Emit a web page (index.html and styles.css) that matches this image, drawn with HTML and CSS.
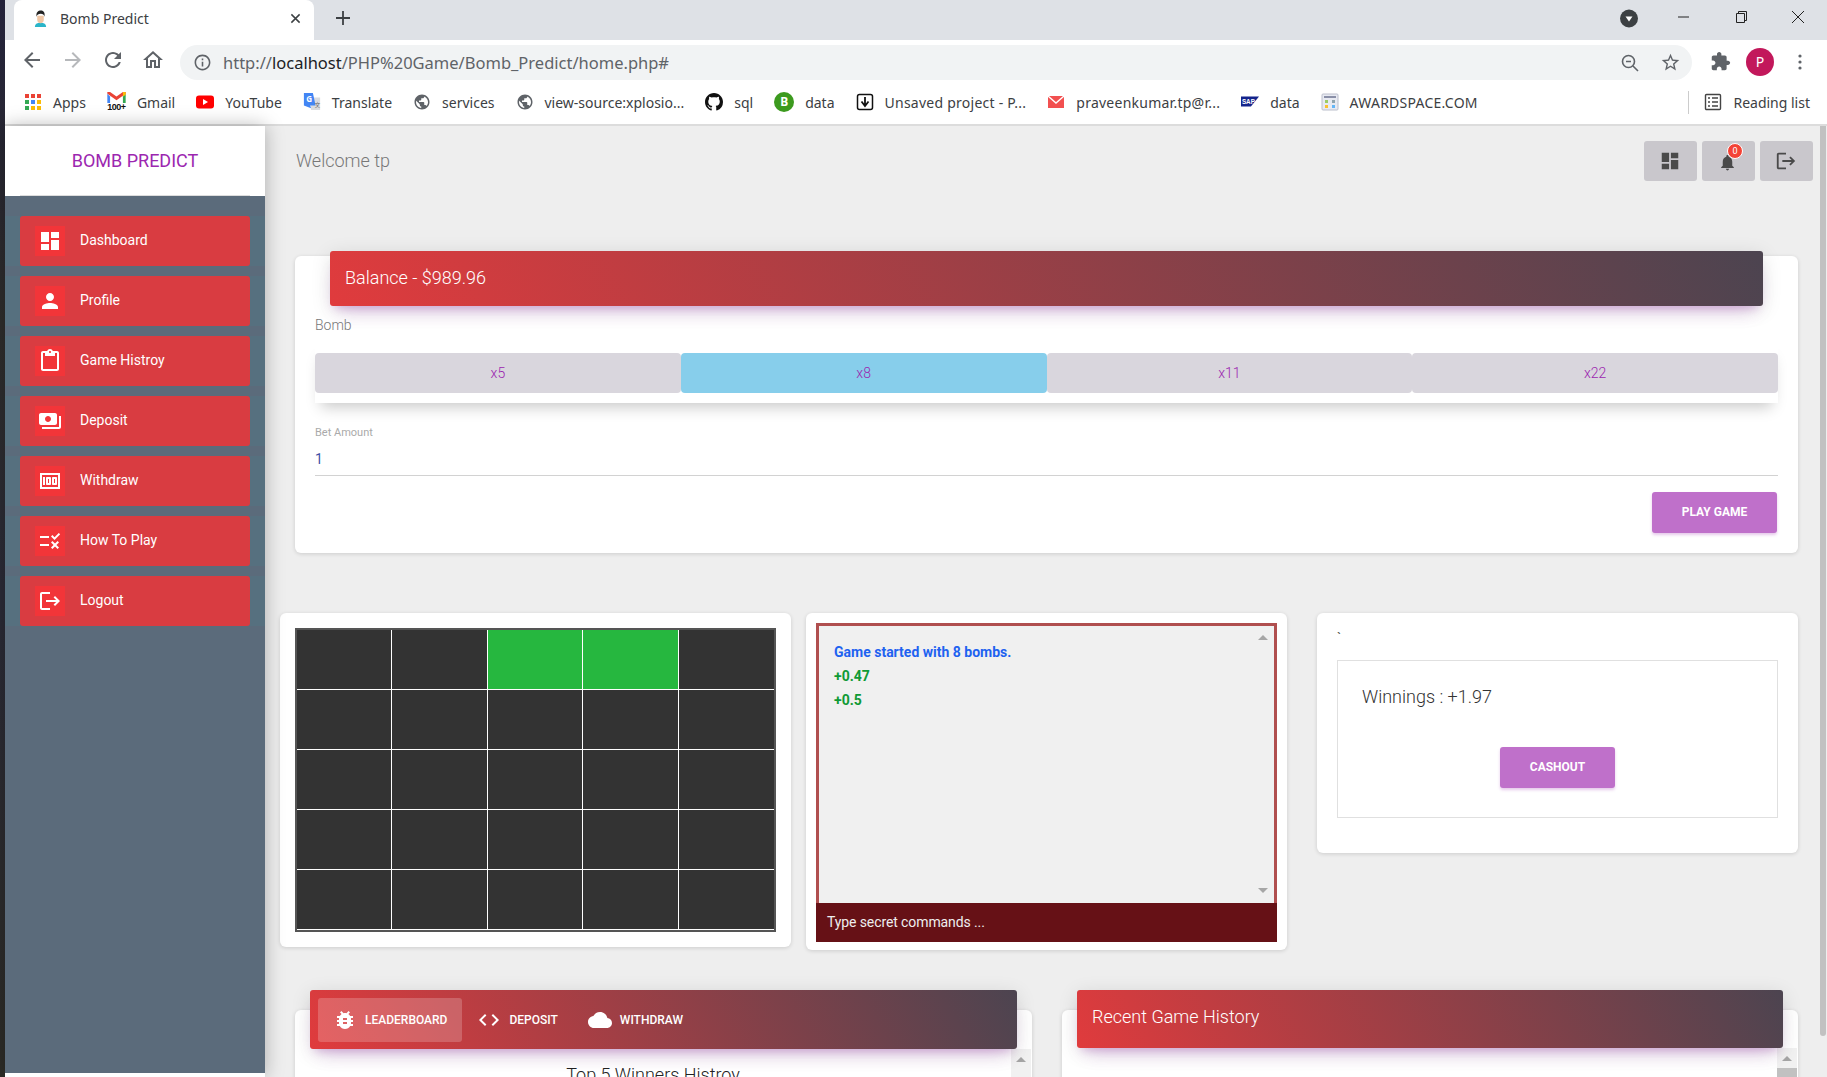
FILE: index.html
```html
<!DOCTYPE html>
<html>
<head>
  <title>Bomb Predict</title>
  <link rel="stylesheet" href="styles.css">
</head>
<body>
  <svg class="defs">
    <symbol id="i-dashboard" viewBox="0 0 24 24"><path d="M3 13h8V3H3v10zm0 8h8v-6H3v6zm10 0h8V11h-8v10zm0-18v6h8V3h-8z"/></symbol>
    <symbol id="i-person" viewBox="0 0 24 24"><path d="M12 12c2.21 0 4-1.79 4-4s-1.79-4-4-4-4 1.79-4 4 1.79 4 4 4zm0 2c-2.67 0-8 1.34-8 4v2h16v-2c0-2.66-5.33-4-8-4z"/></symbol>
    <symbol id="i-clipboard" viewBox="0 0 24 24"><path d="M19 2h-4.18C14.4.84 13.3 0 12 0c-1.3 0-2.4.84-2.82 2H5c-1.1 0-2 .9-2 2v16c0 1.1.9 2 2 2h14c1.1 0 2-.9 2-2V4c0-1.1-.9-2-2-2zm-7 0c.55 0 1 .45 1 1s-.45 1-1 1-1-.45-1-1 .45-1 1-1zm7 18H5V4h2v3h10V4h2v16z"/></symbol>
    <symbol id="i-payments" viewBox="0 0 24 24"><path d="M19 14V6c0-1.1-.9-2-2-2H3c-1.1 0-2 .9-2 2v8c0 1.1.9 2 2 2h14c1.1 0 2-.9 2-2zm-9-1c-1.66 0-3-1.34-3-3s1.34-3 3-3 3 1.34 3 3-1.34 3-3 3zm13-6v11c0 1.1-.9 2-2 2H4v-2h17V7h2z"/></symbol>
    <symbol id="i-money" viewBox="0 0 24 24"><path d="M5 8h2v8H5zm7 0H9c-.55 0-1 .45-1 1v6c0 .55.45 1 1 1h3c.55 0 1-.45 1-1V9c0-.55-.45-1-1-1zm-1 6h-1v-4h1v4zm7-6h-3c-.55 0-1 .45-1 1v6c0 .55.45 1 1 1h3c.55 0 1-.45 1-1V9c0-.55-.45-1-1-1zm-1 6h-1v-4h1v4zM2 4v16h20V4H2zm2 14V6h16v12H4z"/></symbol>
    <symbol id="i-rule" viewBox="0 0 24 24"><path d="M16.54 11L13 7.46l1.41-1.41 2.12 2.12 4.24-4.24 1.41 1.41L16.54 11zM11 7H2v2h9V7zm10 6.41L19.59 12 17 14.59 14.41 12 13 13.41 15.59 16 13 18.59 14.41 20 17 17.41 19.59 20 21 18.59 18.41 16 21 13.41zM11 15H2v2h9v-2z"/></symbol>
    <symbol id="i-logout" viewBox="0 0 24 24"><path d="M17 7l-1.41 1.41L18.17 11H8v2h10.17l-2.58 2.58L17 17l5-5zM4 5h8V3H4c-1.1 0-2 .9-2 2v14c0 1.1.9 2 2 2h8v-2H4V5z"/></symbol>
    <symbol id="i-bell" viewBox="0 0 24 24"><path d="M12 22c1.1 0 2-.9 2-2h-4c0 1.1.89 2 2 2zm6-6v-5c0-3.07-1.64-5.64-4.5-6.32V4c0-.83-.67-1.5-1.5-1.5s-1.5.67-1.5 1.5v.68C7.63 5.36 6 7.92 6 11v5l-2 2v1h16v-1l-2-2z"/></symbol>
    <symbol id="i-bug" viewBox="0 0 24 24"><path d="M20 8h-2.81c-.45-.78-1.07-1.45-1.82-1.96L17 4.41 15.59 3l-2.17 2.17C12.96 5.06 12.49 5 12 5c-.49 0-.96.06-1.41.17L8.41 3 7 4.41l1.62 1.63C7.88 6.55 7.26 7.22 6.81 8H4v2h2.09c-.05.33-.09.66-.09 1v1H4v2h2v1c0 .34.04.67.09 1H4v2h2.81c1.04 1.79 2.97 3 5.19 3s4.15-1.21 5.19-3H20v-2h-2.09c.05-.33.09-.66.09-1v-1h2v-2h-2v-1c0-.34-.04-.67-.09-1H20V8zm-6 8h-4v-2h4v2zm0-4h-4v-2h4v2z"/></symbol>
    <symbol id="i-code" viewBox="0 0 24 24"><path d="M9.4 16.6L4.8 12l4.6-4.6L8 6l-6 6 6 6 1.4-1.4zm5.2 0l4.6-4.6-4.6-4.6L16 6l6 6-6 6-1.4-1.4z"/></symbol>
    <symbol id="i-cloud" viewBox="0 0 24 24"><path d="M19.35 10.04C18.67 6.59 15.64 4 12 4 9.11 4 6.6 5.64 5.35 8.04 2.34 8.36 0 10.91 0 14c0 3.31 2.69 6 6 6h13c2.76 0 5-2.24 5-5 0-2.64-2.05-4.78-4.65-4.96z"/></symbol>
    <symbol id="i-globe" viewBox="0 0 24 24"><path d="M12 2C6.48 2 2 6.48 2 12s4.48 10 10 10 10-4.48 10-10S17.52 2 12 2zm-1 17.93c-3.95-.49-7-3.85-7-7.93 0-.62.08-1.21.21-1.79L9 15v1c0 1.1.9 2 2 2v1.93zm6.9-2.54c-.26-.81-1-1.39-1.9-1.39h-1v-3c0-.55-.45-1-1-1H8v-2h2c.55 0 1-.45 1-1V7h2c1.1 0 2-.9 2-2v-.41c2.93 1.19 5 4.06 5 7.41 0 2.08-.8 3.97-2.1 5.39z"/></symbol>
  </svg>

  <div class="desktop-edge"></div>

  <div class="browser">
    <div class="tabstrip">
      <div class="tab">
        <svg class="favicon" viewBox="0 0 16 18">
          <path fill="#2bb5c9" d="M2 18c0-3 2-4.500 6-4.500s6 1.500 6 4.500z"/>
          <path fill="#f1c7a5" d="M4.500 6h7v4.500c0 2-1.500 3.500-3.500 3.500s-3.500-1.500-3.500-3.500z"/>
          <path fill="#222" d="M3.800 7C3 2.500 5.500 .5 8.500 .5s4.500 2.500 3.700 6.500c-.5-2-1.500-3-4-3s-3.800 1-4.400 3z"/>
        </svg>
        <span class="tab-title">Bomb Predict</span>
        <svg class="tab-close" viewBox="0 0 12 12"><path d="M1.500 1.500l9 9m0-9l-9 9" stroke="#3c4043" stroke-width="1.600" fill="none"/></svg>
      </div>
      <svg class="new-tab" viewBox="0 0 16 16"><path d="M8 1v14M1 8h14" stroke="#3c4043" stroke-width="1.800" fill="none"/></svg>
      <div class="window-controls">
        <svg class="media-btn" viewBox="0 0 18 18"><circle cx="9" cy="9" r="9" fill="#3c4043"/><path d="M5.500 7h7L9 12z" fill="#fff"/></svg>
        <svg class="win-btn" viewBox="0 0 14 14"><path d="M1 7h11" stroke="#222" fill="none"/></svg>
        <svg class="win-btn" viewBox="0 0 14 14"><path d="M2.500 3.500h8v9h-8zM4.500 3.500v-2h8v9h-2" stroke="#222" fill="none"/></svg>
        <svg class="win-btn" viewBox="0 0 14 14"><path d="M1 1l12 12M13 1L1 13" stroke="#222" fill="none"/></svg>
      </div>
    </div>

    <div class="toolbar">
      <svg class="tool-ico" viewBox="0 0 24 24"><path d="M20 11H7.830l5.590-5.590L12 4l-8 8 8 8 1.410-1.410L7.830 13H20v-2z"/></svg>
      <svg class="tool-ico muted" viewBox="0 0 24 24"><path d="M12 4l-1.410 1.410L16.170 11H4v2h12.170l-5.580 5.590L12 20l8-8z"/></svg>
      <svg class="tool-ico" viewBox="0 0 24 24"><path d="M17.650 6.350C16.200 4.900 14.210 4 12 4c-4.420 0-7.990 3.580-7.990 8s3.570 8 7.990 8c3.730 0 6.840-2.550 7.730-6h-2.080c-.82 2.330-3.040 4-5.650 4-3.310 0-6-2.690-6-6s2.690-6 6-6c1.660 0 3.140.69 4.220 1.780L13 11h7V4l-2.350 2.350z"/></svg>
      <svg class="tool-ico" viewBox="0 0 24 24"><path d="M12 5.690l5 4.500V18h-2v-6H9v6H7v-7.810l5-4.500M12 3L2 12h3v8h6v-6h2v6h6v-8h3L12 3z"/></svg>
      <div class="address">
        <svg class="addr-info" viewBox="0 0 24 24"><path d="M11 7h2v2h-2zm0 4h2v6h-2zm1-9C6.480 2 2 6.480 2 12s4.480 10 10 10 10-4.480 10-10S17.520 2 12 2zm0 18c-4.410 0-8-3.590-8-8s3.590-8 8-8 8 3.590 8 8-3.590 8-8 8z"/></svg>
        <span class="url">http://<b>localhost</b>/PHP%20Game/Bomb_Predict/home.php#</span>
        <svg class="addr-zoom" viewBox="0 0 20 20"><circle cx="8.500" cy="8.500" r="6" stroke="#5f6368" stroke-width="1.600" fill="none"/><path d="M13 13l5 5M6 8.500h5" stroke="#5f6368" stroke-width="1.600" fill="none"/></svg>
        <svg class="addr-star" viewBox="0 0 24 24"><path d="M22 9.240l-7.190-.62L12 2 9.190 8.630 2 9.240l5.460 4.730L5.820 21 12 17.270 18.180 21l-1.630-7.030L22 9.240zM12 15.400l-3.760 2.270 1-4.280-3.320-2.880 4.380-.38L12 6.100l1.710 4.040 4.380.38-3.320 2.880 1 4.280L12 15.400z"/></svg>
      </div>
      <svg class="ext-ico" viewBox="0 0 24 24"><path d="M20.500 11H19V7c0-1.100-.9-2-2-2h-4V3.500C13 2.120 11.880 1 10.500 1S8 2.120 8 3.500V5H4c-1.100 0-1.990.9-1.990 2v3.800H3.500c1.490 0 2.700 1.210 2.700 2.700s-1.210 2.700-2.700 2.700H2V20c0 1.100.9 2 2 2h3.800v-1.500c0-1.490 1.210-2.700 2.700-2.700 1.490 0 2.700 1.210 2.700 2.700V22H17c1.100 0 2-.9 2-2v-4h1.500c1.380 0 2.500-1.120 2.500-2.500S21.880 11 20.500 11z"/></svg>
      <div class="avatar">P</div>
      <svg class="menu-dots" viewBox="0 0 4 16"><circle cx="2" cy="2" r="1.600"/><circle cx="2" cy="8" r="1.600"/><circle cx="2" cy="14" r="1.600"/></svg>
    </div>

    <div class="bookmarks">
      <a class="bm">
        <svg class="bm-ico" viewBox="0 0 18 18">
          <rect x="1" y="1" width="4" height="4" fill="#ea4335"/><rect x="7" y="1" width="4" height="4" fill="#ea4335"/><rect x="13" y="1" width="4" height="4" fill="#ea4335"/>
          <rect x="1" y="7" width="4" height="4" fill="#34a853"/><rect x="7" y="7" width="4" height="4" fill="#4285f4"/><rect x="13" y="7" width="4" height="4" fill="#fbbc05"/>
          <rect x="1" y="13" width="4" height="4" fill="#34a853"/><rect x="7" y="13" width="4" height="4" fill="#fbbc05"/><rect x="13" y="13" width="4" height="4" fill="#fbbc05"/>
        </svg>
        Apps
      </a>
      <a class="bm">
        <span class="gmail-ico">
          <svg viewBox="0 0 20 12"><path fill="#ea4335" d="M0 2l10 7 10-7V0h-3l-7 5-7-5H0z"/><path fill="#4285f4" d="M0 2v10h3V5z"/><path fill="#34a853" d="M20 2v10h-3V5z"/><path fill="#fbbc05" d="M17 0h3v3l-3 2z"/></svg>
          <span class="gmail-count">100+</span>
        </span>
        Gmail
      </a>
      <a class="bm">
        <svg class="bm-ico" viewBox="0 0 18 18"><rect y="2.500" width="18" height="13" rx="3" fill="#f00"/><path d="M7 6l5 3-5 3z" fill="#fff"/></svg>
        YouTube
      </a>
      <a class="bm">
        <svg class="bm-ico" viewBox="0 0 20 20"><path fill="#dadce0" d="M8 5h11v14H9z"/><path fill="#4285f4" d="M1 0h10l3 14H8l1 3-8-3z"/><text x="3.500" y="10" class="bm-g">G</text><text x="13" y="15" class="bm-x">文</text></svg>
        Translate
      </a>
      <a class="bm"><svg class="bm-ico globe"><use href="#i-globe"/></svg>services</a>
      <a class="bm"><svg class="bm-ico globe"><use href="#i-globe"/></svg>view-source:xplosio...</a>
      <a class="bm">
        <svg class="bm-ico" viewBox="0 0 16 16"><path fill="#111" d="M8 0C3.580 0 0 3.580 0 8c0 3.540 2.290 6.530 5.470 7.590.4.070.55-.17.55-.41 0-.19-.01-.82-.01-1.490-2.010.37-2.530-.49-2.690-.94-.09-.23-.48-.94-.82-1.130-.28-.15-.68-.52-.01-.53.63-.01 1.080.58 1.230.82.72 1.210 1.870.87 2.330.66.070-.52.28-.87.51-1.070-1.780-.2-3.640-.89-3.640-3.950 0-.87.31-1.590.82-2.150-.08-.2-.36-1.020.08-2.120 0 0 .67-.21 2.200.82.64-.18 1.320-.27 2-.27.68 0 1.360.09 2 .27 1.530-1.040 2.200-.82 2.200-.82.44 1.100.16 1.920.08 2.120.51.56.82 1.270.82 2.150 0 3.070-1.870 3.750-3.650 3.950.29.25.54.73.54 1.480 0 1.070-.01 1.930-.01 2.200 0 .21.15.46.55.38A8.013 8.013 0 0016 8c0-4.420-3.580-8-8-8z"/></svg>
        sql
      </a>
      <a class="bm"><span class="bm-round">B</span>data</a>
      <a class="bm bm-wide">
        <svg class="bm-ico" viewBox="0 0 18 18"><rect x="1.500" y="1.500" width="15" height="15" rx="2" fill="#fff" stroke="#111" stroke-width="1.500"/><path d="M9 4v8M5.500 8.500L9 13l3.500-4.500" stroke="#111" stroke-width="1.800" fill="none"/></svg>
        Unsaved project - P...
      </a>
      <a class="bm bm-wide">
        <svg class="bm-ico" viewBox="0 0 18 18"><rect x="1" y="3" width="16" height="12" fill="#f25050"/><path d="M1 3l8 7 8-7" stroke="#fff" stroke-width="1.400" fill="none"/></svg>
        praveenkumar.tp@r...
      </a>
      <a class="bm">
        <svg class="bm-ico" viewBox="0 0 20 18"><path fill="#14248c" d="M0 3h20l-9 11H0z"/><text x="1" y="11" class="bm-sap">SAP</text></svg>
        data
      </a>
      <a class="bm bm-wide">
        <svg class="bm-ico" viewBox="0 0 18 18"><rect x="1" y="1" width="16" height="16" rx="1" fill="#e8eaf2" stroke="#bcbfcc"/><rect x="3" y="3" width="12" height="2" fill="#8a90a8"/><rect x="4" y="7" width="3" height="3" fill="#9ccc65"/><rect x="11" y="7" width="3" height="3" fill="#90a4ae"/><rect x="4" y="12" width="3" height="3" fill="#fbc02d"/><rect x="11" y="12" width="3" height="3" fill="#64b5f6"/></svg>
        AWARDSPACE.COM
      </a>
      <div class="reading-list">
        <svg class="bm-ico" viewBox="0 0 18 18"><rect x="1.500" y="1.500" width="15" height="15" rx="1" fill="none" stroke="#444" stroke-width="1.400"/><path d="M4 5h2M8 5h6M4 9h2M8 9h6M4 13h2M8 13h6" stroke="#444" stroke-width="1.400" fill="none"/></svg>
        Reading list
      </div>
    </div>

    <div class="page">
      <aside class="sidebar">
        <div class="brand"><span>BOMB PREDICT</span></div>
        <ul class="sidenav">
          <li class="nav-row"><a class="nav-item"><span class="nav-icon"><svg class="ico"><use href="#i-dashboard"/></svg></span>Dashboard</a></li>
          <li class="nav-row"><a class="nav-item"><span class="nav-icon"><svg class="ico"><use href="#i-person"/></svg></span>Profile</a></li>
          <li class="nav-row"><a class="nav-item"><span class="nav-icon"><svg class="ico"><use href="#i-clipboard"/></svg></span>Game Histroy</a></li>
          <li class="nav-row"><a class="nav-item"><span class="nav-icon"><svg class="ico"><use href="#i-payments"/></svg></span>Deposit</a></li>
          <li class="nav-row"><a class="nav-item"><span class="nav-icon"><svg class="ico"><use href="#i-money"/></svg></span>Withdraw</a></li>
          <li class="nav-row"><a class="nav-item"><span class="nav-icon"><svg class="ico"><use href="#i-rule"/></svg></span>How To Play</a></li>
          <li class="nav-row"><a class="nav-item"><span class="nav-icon"><svg class="ico"><use href="#i-logout"/></svg></span>Logout</a></li>
        </ul>
      </aside>

      <main class="content">
        <div class="topbar">
          <span class="welcome">Welcome tp</span>
          <div class="top-actions">
            <a class="top-btn"><svg class="top-ico"><use href="#i-dashboard"/></svg></a>
            <a class="top-btn"><svg class="top-ico bell-ico"><use href="#i-bell"/></svg><span class="badge">0</span></a>
            <a class="top-btn"><svg class="top-ico"><use href="#i-logout"/></svg></a>
          </div>
        </div>

        <section class="card balance-card">
          <div class="card-header balance-header">Balance - $989.96</div>
          <div class="field-label">Bomb</div>
          <div class="bomb-tabs">
            <a class="bomb-tab">x5</a>
            <a class="bomb-tab active">x8</a>
            <a class="bomb-tab">x11</a>
            <a class="bomb-tab">x22</a>
          </div>
          <div class="bet-label">Bet Amount</div>
          <div class="bet-value">1</div>
          <div class="form-actions"><a class="btn play-btn">PLAY GAME</a></div>
        </section>

        <div class="game-row">
          <section class="card board-card">
            <div class="board">
              <div class="cell"></div><div class="cell"></div><div class="cell won"></div><div class="cell won"></div><div class="cell"></div>
              <div class="cell"></div><div class="cell"></div><div class="cell"></div><div class="cell"></div><div class="cell"></div>
              <div class="cell"></div><div class="cell"></div><div class="cell"></div><div class="cell"></div><div class="cell"></div>
              <div class="cell"></div><div class="cell"></div><div class="cell"></div><div class="cell"></div><div class="cell"></div>
              <div class="cell"></div><div class="cell"></div><div class="cell"></div><div class="cell"></div><div class="cell"></div>
            </div>
          </section>

          <section class="card console-card">
            <div class="console-log">
              <div class="log-lines">
                <p class="log-info">Game started with 8 bombs.</p>
                <p class="log-win">+0.47</p>
                <p class="log-win">+0.5</p>
              </div>
              <div class="log-scroll"><span class="arrow-up"></span><span class="arrow-down"></span></div>
            </div>
            <div class="console-input">Type secret commands ...</div>
          </section>

          <section class="card winnings-card">
            <div class="tick">`</div>
            <div class="winnings-box">
              <div class="winnings">Winnings : +1.97</div>
              <div class="cashout-row"><a class="btn cashout-btn">CASHOUT</a></div>
            </div>
          </section>
        </div>

        <div class="history-row">
          <section class="card history-card">
            <div class="card-header nav-header">
              <a class="head-tab active"><svg class="head-ico"><use href="#i-bug"/></svg>LEADERBOARD</a>
              <a class="head-tab"><svg class="head-ico"><use href="#i-code"/></svg>DEPOSIT</a>
              <a class="head-tab"><svg class="head-ico"><use href="#i-cloud"/></svg>WITHDRAW</a>
            </div>
            <div class="history-body">
              <h4 class="history-title">Top 5 Winners Histroy</h4>
              <div class="inner-scroll"><span class="arrow-up"></span></div>
            </div>
          </section>

          <section class="card history-card">
            <div class="card-header recent-header">Recent Game History</div>
            <div class="history-body">
              <div class="history-title"></div>
              <div class="inner-scroll"><span class="arrow-up"></span><span class="scroll-thumb"></span></div>
            </div>
          </section>
        </div>
      </main>

      <div class="page-scroll"><span class="page-thumb"></span></div>
    </div>
  </div>
</body>
</html>
```

FILE: styles.css
```css
* {
  box-sizing: border-box;
}
html, body {
  height: 100%;
}
body {
  margin: 0;
  display: flex;
  overflow: hidden;
  font-family: Roboto, sans-serif;
  background: #eee;
}
a {
  color: inherit;
  text-decoration: none;
}
.defs {
  display: none;
}
.desktop-edge {
  width: 5px;
  flex: none;
  background: linear-gradient(#23223a, #2f2e2c 30%, #2b2b38 55%, #2e2d28);
}
.browser {
  flex: 1;
  min-width: 0;
  display: flex;
  flex-direction: column;
}

/* browser chrome */
.tabstrip {
  height: 40px;
  flex: none;
  display: flex;
  align-items: center;
  padding-left: 9px;
  background: #dee1e6;
  font-family: "Noto Sans", sans-serif;
}
.tab {
  width: 300px;
  height: 40px;
  display: flex;
  align-items: center;
  padding: 0 13px 4px 19px;
  background: #fff;
  border-radius: 8px 8px 0 0;
  font-size: 14px;
  color: #3c4043;
}
.favicon {
  width: 15px;
  height: 17px;
  margin-right: 12px;
}
.tab-close {
  width: 11px;
  height: 11px;
  margin-left: auto;
}
.new-tab {
  width: 16px;
  height: 16px;
  margin: 0 0 4px 21px;
}
.window-controls {
  margin: 0 0 4px auto;
  display: flex;
  align-items: center;
  padding-right: 22px;
}
.media-btn {
  width: 18px;
  height: 19px;
  margin-right: 39px;
}
.win-btn {
  width: 14px;
  height: 14px;
  margin-left: 43px;
  margin-top: -3px;
}
.media-btn + .win-btn {
  margin-left: 0;
}
.toolbar {
  height: 40px;
  flex: none;
  display: flex;
  align-items: center;
  padding-left: 15px;
  background: #fff;
  font-family: "Noto Sans", sans-serif;
}
.tool-ico {
  width: 24px;
  height: 24px;
  margin-right: 16px;
  fill: #5f6368;
}
.tool-ico:first-child {
  margin-right: 17px;
}
.tool-ico.muted {
  fill: #b6b8bb;
}
.address {
  width: 1512px;
  height: 35px;
  margin: 5px 0 0 -1px;
  flex: none;
  display: flex;
  align-items: center;
  padding: 0 11px 0 13px;
  background: #f1f3f4;
  border-radius: 18px;
}
.addr-info {
  width: 19px;
  height: 19px;
  margin-right: 11px;
  fill: #5f6368;
}
.url {
  font-size: 16.5px;
  color: #5f6368;
}
.url b {
  font-weight: 400;
  color: #202124;
}
.addr-zoom {
  width: 20px;
  height: 20px;
  margin-left: auto;
  margin-right: 20px;
}
.addr-star {
  width: 21px;
  height: 21px;
  fill: #5f6368;
}
.ext-ico {
  width: 21px;
  height: 21px;
  margin: 3px 0 0 18px;
  fill: #5f6368;
}
.avatar {
  width: 28px;
  height: 28px;
  margin: 3px 0 0 15px;
  border-radius: 50%;
  background: #c2185b;
  color: #fff;
  font-size: 14px;
  text-align: center;
  line-height: 28px;
}
.menu-dots {
  width: 4px;
  height: 16px;
  margin: 3px 0 0 24px;
  fill: #5f6368;
}
.bookmarks {
  height: 46px;
  flex: none;
  display: flex;
  align-items: center;
  gap: 21px;
  padding: 0 17px 0 19px;
  background: #fff;
  border-bottom: 2px solid #dcdcdc;
  font-family: "Noto Sans", sans-serif;
  font-size: 14px;
  color: #3c4043;
  white-space: nowrap;
}
.bm {
  display: flex;
  align-items: center;
  gap: 11px;
}
.bm-wide {
  letter-spacing: .25px;
}
.bm-ico {
  width: 18px;
  height: 18px;
  flex: none;
}
.globe {
  fill: #5f6368;
}
.bm-g {
  font-size: 9px;
  font-weight: 700;
  fill: #fff;
}
.bm-x {
  font-size: 6px;
  fill: #666;
  font-family: "Noto Sans CJK SC", sans-serif;
}
.bm-sap {
  font-size: 7px;
  font-weight: 700;
  fill: #fff;
  font-family: "Liberation Sans", sans-serif;
}
.gmail-ico {
  width: 19px;
  display: flex;
  flex-direction: column;
  align-items: center;
}
.gmail-ico svg {
  width: 19px;
  height: 11px;
}
.gmail-count {
  font-family: "Liberation Sans", sans-serif;
  font-size: 9px;
  line-height: 9px;
  font-weight: 700;
  color: #111;
  letter-spacing: -.5px;
}
.bm-round {
  width: 20px;
  height: 20px;
  border-radius: 50%;
  background: #3c9a1e;
  color: #fff;
  font-size: 12px;
  font-weight: 700;
  text-align: center;
  line-height: 20px;
}
.reading-list {
  margin-left: auto;
  display: flex;
  align-items: center;
  gap: 11px;
  height: 23px;
  padding-left: 15px;
  border-left: 1px solid #ccc;
}

/* page */
.page {
  flex: 1;
  min-height: 0;
  display: flex;
  background: #eee;
}
.sidebar {
  width: 260px;
  flex: none;
  display: flex;
  flex-direction: column;
  background: #fff;
  box-shadow: 0 0 18px rgba(0, 0, 0, .28);
  z-index: 2;
}
.brand {
  height: 70px;
  flex: none;
  margin: 0 15px;
  display: flex;
  align-items: center;
  justify-content: center;
  border-bottom: 1px solid #ddd;
  font-size: 18px;
  color: #9c27b0;
}
.sidenav {
  height: 877px;
  flex: none;
  margin: 0;
  padding: 20px 0 0;
  list-style: none;
  display: flex;
  flex-direction: column;
  gap: 10px;
  background: #5b6b7b;
}
.nav-row {
  background: #56707f;
  padding: 0 15px;
}
.nav-item {
  height: 50px;
  display: flex;
  align-items: center;
  gap: 15px;
  padding: 0 0 2px 15px;
  background: #d93c41;
  border-radius: 3px;
  font-size: 14px;
  color: #fff;
}
.nav-icon {
  width: 30px;
  height: 30px;
  margin-bottom: -2px;
  display: flex;
  align-items: center;
  justify-content: center;
  background: #f23539;
}
.ico {
  width: 24px;
  height: 24px;
  fill: #fff;
}
.content {
  flex: 1;
  min-width: 0;
  padding: 0 22px 0 15px;
}
.page-scroll {
  width: 6px;
  margin-right: 1px;
  flex: none;
}
.page-thumb {
  display: block;
  height: 910px;
  width: 6px;
  background: #c1c1c1;
  border-radius: 0 0 3px 3px;
}
.topbar {
  height: 55px;
  padding: 15px 0 0 16px;
  margin-right: -15px;
  display: flex;
  justify-content: space-between;
}
.welcome {
  font-size: 18px;
  font-weight: 300;
  line-height: 40px;
  color: #777;
}
.top-actions {
  display: flex;
  gap: 5px;
}
.top-btn {
  width: 53px;
  height: 40px;
  padding-right: 2px;
  position: relative;
  display: flex;
  align-items: center;
  justify-content: center;
  background: #c9c7cc;
  border-radius: 3px;
}
.top-ico {
  width: 22px;
  height: 22px;
  fill: #4a4a4a;
}
.bell-ico {
  width: 19px;
  height: 19px;
  margin-top: 2px;
}
.badge {
  position: absolute;
  top: 2px;
  left: 25px;
  width: 16px;
  height: 16px;
  border-radius: 50%;
  border: 1px solid #fff;
  background: #f44336;
  color: #fff;
  font-size: 9px;
  line-height: 14px;
  text-align: center;
}
.card {
  background: #fff;
  border-radius: 6px;
  box-shadow: 0 1px 4px rgba(0, 0, 0, .14);
}
.card-header {
  background: linear-gradient(60deg, #e03b3d, #4c4450);
  border-radius: 3px;
  color: #fff;
  box-shadow: 0 12px 20px -10px rgba(156, 39, 176, .28), 0 4px 20px 0 rgba(0, 0, 0, .12), 0 7px 8px -5px rgba(156, 39, 176, .2);
}
.balance-card {
  display: flow-root;
  height: 297px;
  margin: 75px 0 0 15px;
  padding: 0 20px;
}
.balance-header {
  height: 55px;
  margin: -5px 15px 0;
  padding-left: 15px;
  font-size: 18px;
  font-weight: 300;
  line-height: 53px;
}
.field-label {
  margin-top: 10px;
  font-size: 14px;
  line-height: 18px;
  font-weight: 300;
  color: #777;
}
.bomb-tabs {
  height: 60px;
  margin-top: 9px;
  padding: 10px 0;
  display: flex;
  box-shadow: 0 10px 14px -6px rgba(0, 0, 0, .22);
}
.bomb-tab {
  flex: 1;
  display: flex;
  align-items: center;
  justify-content: center;
  padding-bottom: 1px;
  background: #d9d6dd;
  border-radius: 4px;
  font-size: 14px;
  font-weight: 300;
  color: #9c27b0;
}
.bomb-tab.active {
  background: #87ceeb;
}
.bet-label {
  margin-top: 23px;
  font-size: 11px;
  line-height: 14px;
  color: #aaa;
}
.bet-value {
  height: 36px;
  padding-top: 10px;
  border-bottom: 1px solid #d2d2d2;
  font-size: 14px;
  line-height: 18px;
  color: #3f51a5;
}
.form-actions {
  margin-top: 16px;
  display: flex;
  justify-content: flex-end;
  padding-right: 1px;
}
.btn {
  display: flex;
  align-items: center;
  justify-content: center;
  padding-bottom: 2px;
  background: #bf70ca;
  border-radius: 3px;
  color: #fff;
  font-size: 12px;
  font-weight: 700;
  box-shadow: 0 2px 3px rgba(156, 39, 176, .25);
}
.play-btn {
  width: 125px;
  height: 41px;
}
.game-row {
  margin-top: 60px;
  display: grid;
  grid-template-columns: 511px 481px 496px;
  align-items: start;
  column-gap: 15px;
}
.board-card {
  padding: 15px;
}
.board {
  height: 304px;
  display: grid;
  grid-template-columns: repeat(5, 1fr);
  grid-template-rows: repeat(5, 60px);
  border: 2px solid #555;
}
.cell {
  background: #333;
  border-right: 1px solid #fff;
  border-bottom: 1px solid #fff;
}
.cell:nth-child(5n) {
  border-right: 0;
}
.cell.won {
  background: #26b73f;
}
.console-card {
  height: 337px;
  padding: 10px 10px 8px;
}
.console-log {
  height: 280px;
  display: flex;
  background: #f0f0f0;
  border: solid #b04f4f;
  border-width: 3px 3px 0;
}
.log-lines {
  flex: 1;
  padding: 14px 15px;
  font-size: 14px;
  font-weight: 700;
  line-height: 24px;
}
.log-lines p {
  margin: 0;
}
.log-info {
  color: #1e62f0;
}
.log-win {
  color: #0f9a35;
}
.log-scroll {
  width: 22px;
  padding: 9px 0 10px;
  display: flex;
  flex-direction: column;
  justify-content: space-between;
  align-items: center;
}
.arrow-up {
  width: 0;
  height: 0;
  border: 5px solid transparent;
  border-top: 0;
  border-bottom-color: #a6a6a6;
}
.arrow-down {
  width: 0;
  height: 0;
  border: 5px solid transparent;
  border-bottom: 0;
  border-top-color: #a6a6a6;
}
.console-input {
  height: 39px;
  padding-left: 11px;
  background: #661116;
  color: #eee;
  font-size: 14px;
  line-height: 38px;
  letter-spacing: -.1px;
}
.winnings-card {
  height: 240px;
  margin-left: 15px;
  padding: 10px 20px;
}
.tick {
  height: 37px;
  font-size: 14px;
  line-height: 30px;
  color: #555;
}
.winnings-box {
  height: 158px;
  border: 1px solid #e0e0e0;
}
.winnings {
  padding: 22px 0 0 24px;
  font-size: 18px;
  font-weight: 300;
  line-height: 28px;
  color: #333;
}
.cashout-row {
  margin-top: 36px;
  display: flex;
  justify-content: center;
}
.cashout-btn {
  width: 115px;
  height: 41px;
}
.history-row {
  margin: 60px 0 0 15px;
  display: grid;
  grid-template-columns: 737px 736px;
  column-gap: 30px;
}
.history-card {
  height: 200px;
}
.nav-header {
  height: 59px;
  margin: -20px 15px 0;
  padding: 8px;
  display: flex;
  position: relative;
}
.recent-header {
  height: 58px;
  margin: -20px 15px 0;
  padding-left: 15px;
  position: relative;
  font-size: 18px;
  font-weight: 300;
  line-height: 54px;
}
.head-tab {
  height: 44px;
  display: flex;
  align-items: center;
  gap: 8px;
  padding: 0 15px;
  border-radius: 3px;
  font-size: 12px;
  font-weight: 500;
}
.head-tab.active {
  background: rgba(255, 255, 255, .2);
}
.head-ico {
  width: 24px;
  height: 24px;
  fill: #fff;
}
.history-body {
  display: flex;
  height: 140px;
}
.history-title {
  flex: 1;
  margin: 13px 0 0;
  font-size: 18px;
  font-weight: 300;
  line-height: 26px;
  text-align: center;
  color: #222;
}
.inner-scroll {
  width: 20px;
  margin-right: 1px;
  padding-top: 8px;
  display: flex;
  flex-direction: column;
  align-items: center;
  background: #f1f1f1;
}
.scroll-thumb {
  width: 100%;
  height: 60px;
  margin-top: 7px;
  background: #c1c1c1;
}
```
